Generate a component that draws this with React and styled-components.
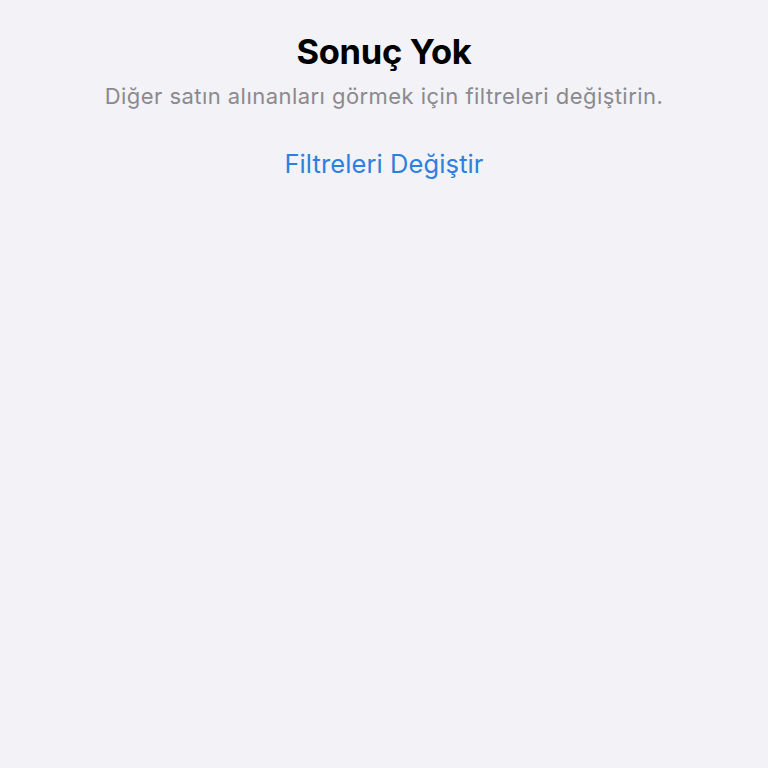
import React from 'react';
import styled, { createGlobalStyle } from "styled-components";

const GlobalStyle = createGlobalStyle`
    html, body {
        margin: 0;
        padding: 0;
        background: #f2f2f7;
    }
    body {
        font-family: Inter, "Noto Sans", sans-serif;
        -webkit-font-smoothing: antialiased;
    }
`

const Page = styled.div`
    min-height: 768px;
    display: flex;
    flex-direction: column;
    align-items: center;
    background: #f2f2f7;
    padding-top: 29px;
    box-sizing: border-box;
`

const Title = styled.h1`
    margin: 0;
    font-size: 34.5px;
    font-weight: 700;
    color: #000;
    letter-spacing: -0.3px;
    line-height: 46px;
`

const Subtitle = styled.p`
    margin: 7px 0 0;
    font-size: 22px;
    color: #8a8a8e;
    letter-spacing: 0.45px;
    line-height: 28px;
`

const LinkButton = styled.button`
    margin-top: 38px;
    border: none;
    background: none;
    padding: 0;
    font-family: inherit;
    font-size: 25.5px;
    color: #2f7fe0;
    letter-spacing: 0.1px;
    line-height: 32px;
    cursor: pointer;
`

export default function App(){
    return(
        <>
            <GlobalStyle />
            <Page>
                <Title>Sonuç Yok</Title>
                <Subtitle>Diğer satın alınanları görmek için filtreleri değiştirin.</Subtitle>
                <LinkButton>Filtreleri Değiştir</LinkButton>
            </Page>
        </>
    )
}
